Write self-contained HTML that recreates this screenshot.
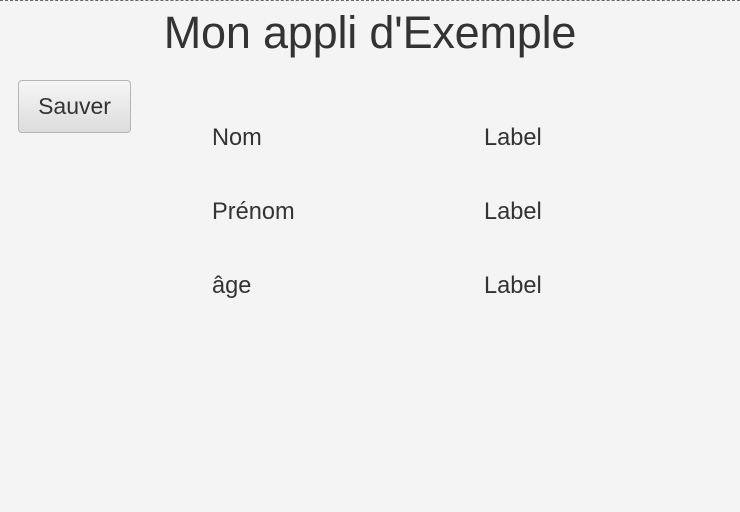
<!DOCTYPE html>
<html><head><meta charset="utf-8"><style>
html,body{margin:0;padding:0;width:740px;height:512px;background:#f4f4f4;overflow:hidden;font-family:"Liberation Sans",sans-serif;color:#333}
.top{position:absolute;left:0;top:0;width:740px;height:0;border-top:1px dashed #666}
.t{position:absolute;left:0;width:740px;top:6px;text-align:center;font-size:45px;line-height:54px;letter-spacing:-0.2px}
.btn{position:absolute;left:18px;top:80px;width:111px;height:51px;border:1.5px solid #b5b5b5;border-radius:4px;background:linear-gradient(#f6f6f6,#dcdcdc);font-size:23px;line-height:51px;text-align:center;box-sizing:content-box}
.l{position:absolute;font-size:23.6px;line-height:26px}
</style></head><body>
<div class="top"></div>
<div class="t">Mon appli d'Exemple</div>
<div class="btn">Sauver</div>
<div class="l" style="left:212px;top:125px">Nom</div>
<div class="l" style="left:484px;top:125px">Label</div>
<div class="l" style="left:212px;top:199px">Prénom</div>
<div class="l" style="left:484px;top:199px">Label</div>
<div class="l" style="left:212px;top:273px">âge</div>
<div class="l" style="left:484px;top:273px">Label</div>
</body></html>
